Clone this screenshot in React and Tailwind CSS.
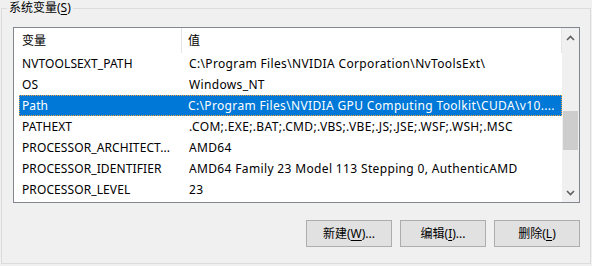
const rows = [
  ['NVTOOLSEXT_PATH', 'C:\\Program Files\\NVIDIA Corporation\\NvToolsExt\\'],
  ['OS', 'Windows_NT'],
  ['Path', 'C:\\Program Files\\NVIDIA GPU Computing Toolkit\\CUDA\\v10....'],
  ['PATHEXT', '.COM;.EXE;.BAT;.CMD;.VBS;.VBE;.JS;.JSE;.WSF;.WSH;.MSC'],
  ['PROCESSOR_ARCHITECT...', 'AMD64'],
  ['PROCESSOR_IDENTIFIER', 'AMD64 Family 23 Model 113 Stepping 0, AuthenticAMD'],
  ['PROCESSOR_LEVEL', '23'],
]

const font = { fontFamily: '"Noto Sans", "Noto Sans CJK SC", sans-serif' }

function Chevron({ up }) {
  return (
    <svg width="9" height="6" viewBox="0 0 9 6">
      <polyline
        points={up ? '1,5 4.5,1.5 8,5' : '1,1 4.5,4.5 8,1'}
        fill="none"
        stroke="#606060"
        strokeWidth="1.6"
      />
    </svg>
  )
}

function Button({ children }) {
  return (
    <button className="flex h-[27px] w-[86px] items-center justify-center border border-[#adadad] bg-[#e1e1e1] text-[12px] text-black">
      {children}
    </button>
  )
}

export default function App() {
  return (
    <div className="relative h-[266px] w-[592px] overflow-hidden bg-[#f0f0f0] text-[12px] text-black" style={font}>
      <div className="absolute left-[7px] top-[0px] bg-[#f0f0f0] px-[2px] leading-[16px]">
        系统变量(<span className="underline underline-offset-2">S</span>)
      </div>
      <div className="ml-[1px] mt-[8px] h-[256px] w-[590px] border border-[#dcdcdc] pl-[11px] pr-[10px] pt-[18px]">
        <div className="flex h-[176px] w-[567px] border border-[#828790] bg-white">
          <div className="flex-1">
            <div className="flex h-[25px] items-center">
              <div className="flex h-full w-[168px] items-center border-r border-[#e5e5e5] pl-[8px]">变量</div>
              <div className="flex h-full flex-1 items-center border-r border-[#e5e5e5] pl-[6px]">值</div>
            </div>
            {rows.map(([k, v]) => {
              const sel = k === 'Path'
              return (
                <div
                  key={k}
                  className={`ml-[5px] flex h-[21px] items-center whitespace-nowrap pl-[3px] ${
                    sel ? 'border border-dotted border-[#f0a040] bg-[#0078d7] text-white' : ''
                  }`}
                >
                  <div className={`overflow-hidden tracking-[0.1px] ${sel ? 'w-[166px] -ml-[1px]' : 'w-[167px]'}`}>{k}</div>
                  <div className="flex-1 overflow-hidden tracking-[0.35px]">{v}</div>
                </div>
              )
            })}
          </div>
          <div className="flex w-[17px] flex-col bg-[#f0f0f0]">
            <div className="flex h-[17px] items-center justify-center pt-[3px]">
              <Chevron up />
            </div>
            <div className="h-[66px]" />
            <div className="mx-[1px] h-[39px] bg-[#cdcdcd]" />
            <div className="flex-1" />
            <div className="flex h-[17px] items-center justify-center pb-[2px]">
              <Chevron />
            </div>
          </div>
        </div>
        <div className="mt-[17px] flex justify-end gap-[8px]">
          <Button>
            新建(<span className="underline underline-offset-2">W</span>)...
          </Button>
          <Button>
            编辑(<span className="underline underline-offset-2">I</span>)...
          </Button>
          <Button>
            删除(<span className="underline underline-offset-2">L</span>)
          </Button>
        </div>
      </div>
    </div>
  )
}
